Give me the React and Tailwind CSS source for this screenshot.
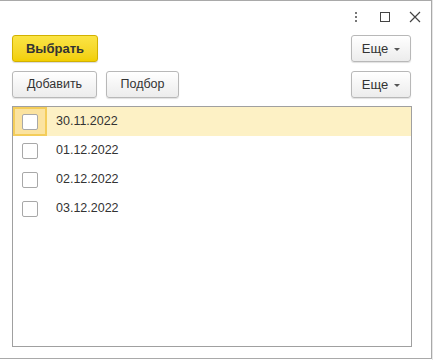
import React from 'react';

const rows = ['30.11.2022', '01.12.2022', '02.12.2022', '03.12.2022'];

function MoreButton() {
  return (
    <button className="h-[27px] w-[60px] flex items-center justify-center gap-[6px] rounded-[3px] border border-[#b8b8b8] bg-gradient-to-b from-white to-[#ececec] text-[13px] text-[#333] shadow-[0_1px_1px_rgba(0,0,0,0.12)]">
      <span>Еще</span>
      <span className="w-0 h-0 border-l-[3px] border-r-[3px] border-t-[3px] border-l-transparent border-r-transparent border-t-[#555] mt-[2px]" />
    </button>
  );
}

function GrayButton({ children, w }) {
  return (
    <button className={`h-[27px] ${w} flex items-center justify-center rounded-[3px] border border-[#b8b8b8] bg-gradient-to-b from-white to-[#ececec] text-[12.5px] text-[#333] shadow-[0_1px_1px_rgba(0,0,0,0.12)]`}>
      {children}
    </button>
  );
}

export default function App() {
  return (
    <div className="w-[433px] h-[360px] bg-white flex" style={{ fontFamily: '"Liberation Sans", Arial, sans-serif' }}>
      <div className="w-[432px] h-[359px] border-t border-r border-b border-[#a9a9a9] flex flex-col">
        {/* title bar */}
        <div className="h-[32px] flex items-center justify-end pr-[10px] gap-[19px]">
          <div className="flex flex-col gap-[2px] mr-[4px]">
            <span className="w-[2px] h-[2px] bg-[#777]" />
            <span className="w-[2px] h-[2px] bg-[#777]" />
            <span className="w-[2px] h-[2px] bg-[#777]" />
          </div>
          <span className="w-[10px] h-[10px] border border-[#444]" />
          <svg width="12" height="12" viewBox="0 0 12 12">
            <path d="M1 1L11 11M11 1L1 11" stroke="#444" strokeWidth="1.2" />
          </svg>
        </div>

        {/* row 1 */}
        <div className="flex items-center justify-between pl-[12px] pr-[20px] mt-[2px]">
          <button className="h-[27px] w-[86px] rounded-[3px] border border-[#d2b100] bg-gradient-to-b from-[#fbe443] to-[#f2cf00] text-[13px] font-bold text-[#333] shadow-[0_1px_1px_rgba(0,0,0,0.15)]">
            Выбрать
          </button>
          <MoreButton />
        </div>

        {/* row 2 */}
        <div className="flex items-center justify-between pl-[12px] pr-[20px] mt-[9px]">
          <div className="flex gap-[9px]">
            <GrayButton w="w-[85px]">Добавить</GrayButton>
            <GrayButton w="w-[73px]">Подбор</GrayButton>
          </div>
          <MoreButton />
        </div>

        {/* table */}
        <div className="ml-[12px] mt-[8px] w-[400px] h-[241px] border border-[#a0a0a0]">
          {rows.map((d, i) => (
            <div key={d} className={`h-[29px] flex items-center ${i === 0 ? 'bg-[#fdf1c5]' : ''}`}>
              <div className={`w-[34px] h-[29px] flex items-center justify-center ${i === 0 ? 'bg-[#fbe3a0] border-2 border-[#f4cd5a]' : ''}`}>
                <span className="w-[16px] h-[16px] rounded-[2px] border border-[#a8a8a8] bg-white" />
              </div>
              <span className="ml-[9px] text-[12.5px] text-[#333] -mt-[1px]">{d}</span>
            </div>
          ))}
        </div>
      </div>
      <div className="w-[1px] h-full bg-[#e6e6e6]" />
    </div>
  );
}
